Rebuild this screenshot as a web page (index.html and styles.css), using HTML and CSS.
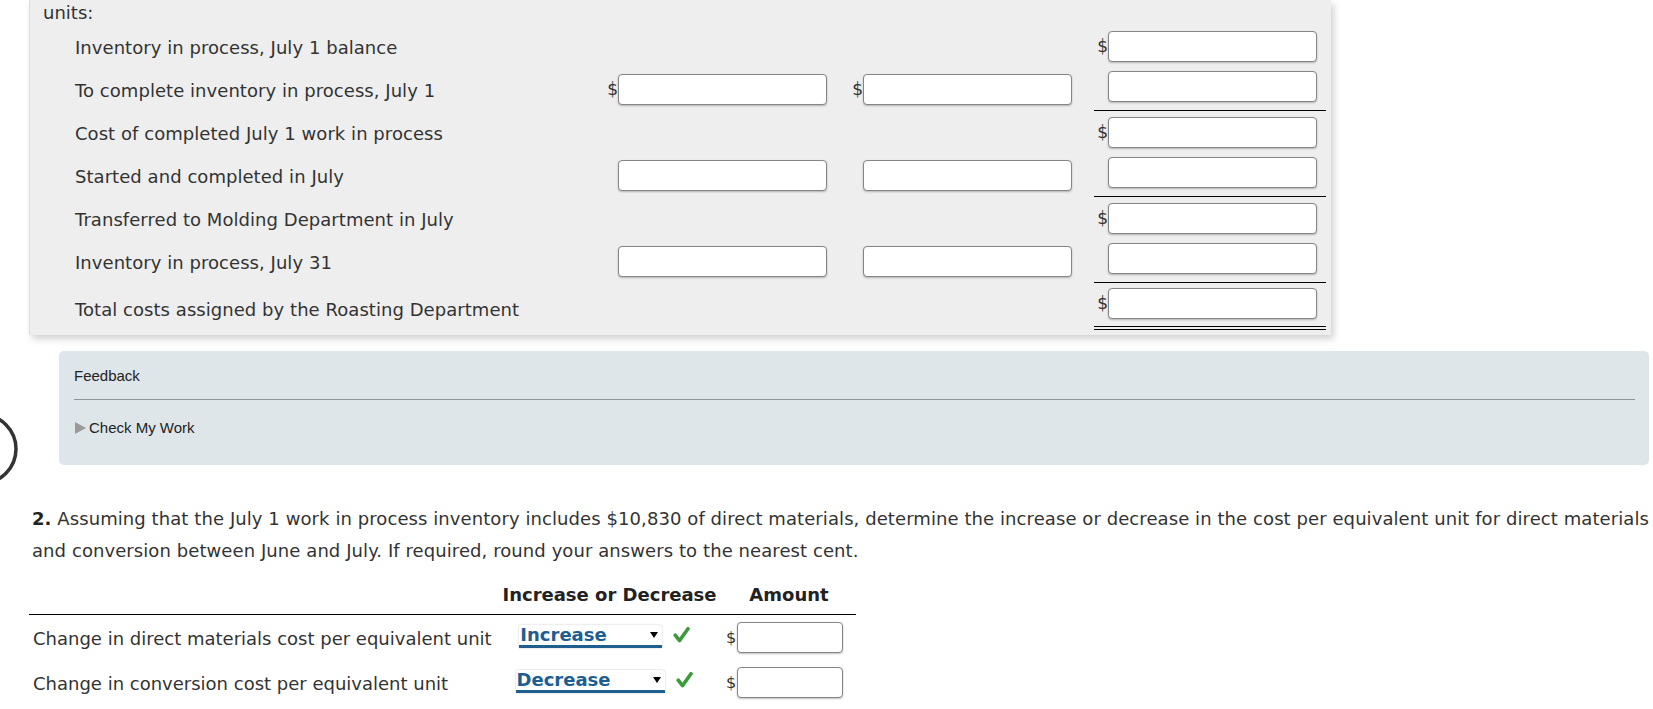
FILE: index.html
```html
<!DOCTYPE html>
<html lang="en">
<head>
<meta charset="utf-8">
<title>Roasting Department costs</title>
<link rel="stylesheet" href="styles.css">
</head>
<body>
<svg class="step-circle" width="24" height="80" viewBox="0 0 24 80" aria-hidden="true">
  <circle cx="-18.3" cy="37" r="34.3" fill="none" stroke="#333" stroke-width="3.5"/>
</svg>

<div class="panel">
  <div class="units">units:</div>
  <div class="rows">
    <div class="row">
      <div class="label">Inventory in process, July 1 balance</div>
      <div class="cell"></div>
      <div class="cell"></div>
      <div class="cell"><span class="dollar">$</span><input class="box" type="text"></div>
    </div>
    <div class="row">
      <div class="label">To complete inventory in process, July 1</div>
      <div class="cell"><span class="dollar">$</span><input class="box" type="text"></div>
      <div class="cell"><span class="dollar">$</span><input class="box" type="text"></div>
      <div class="cell rule"><input class="box" type="text"></div>
    </div>
    <div class="row">
      <div class="label">Cost of completed July 1 work in process</div>
      <div class="cell"></div>
      <div class="cell"></div>
      <div class="cell"><span class="dollar">$</span><input class="box" type="text"></div>
    </div>
    <div class="row">
      <div class="label">Started and completed in July</div>
      <div class="cell"><input class="box" type="text"></div>
      <div class="cell"><input class="box" type="text"></div>
      <div class="cell rule"><input class="box" type="text"></div>
    </div>
    <div class="row">
      <div class="label">Transferred to Molding Department in July</div>
      <div class="cell"></div>
      <div class="cell"></div>
      <div class="cell"><span class="dollar">$</span><input class="box" type="text"></div>
    </div>
    <div class="row">
      <div class="label">Inventory in process, July 31</div>
      <div class="cell"><input class="box" type="text"></div>
      <div class="cell"><input class="box" type="text"></div>
      <div class="cell rule"><input class="box" type="text"></div>
    </div>
    <div class="row row-total">
      <div class="label">Total costs assigned by the Roasting Department</div>
      <div class="cell"></div>
      <div class="cell"></div>
      <div class="cell double"><span class="dollar">$</span><input class="box" type="text"></div>
    </div>
  </div>
</div>

<div class="feedback">
  <div class="fb-title">Feedback</div>
  <div class="fb-divider"></div>
  <div class="fb-check"><span class="fb-arrow"></span>Check My Work</div>
</div>

<p class="question"><b>2.</b> Assuming that the July 1 work in process inventory includes $10,830 of direct materials, determine the increase or decrease in the cost per equivalent unit for direct materials and conversion between June and July. If required, round your answers to the nearest cent.</p>

<div class="answer">
  <div class="a-row a-head">
    <div class="a-label"></div>
    <div class="a-sel">Increase or Decrease</div>
    <div class="a-amt">Amount</div>
  </div>
  <div class="a-row">
    <div class="a-label">Change in direct materials cost per equivalent unit</div>
    <div class="a-sel">
      <span class="select"><span class="sel-text">Increase</span><span class="sel-arrow"></span></span>
      <svg class="check" width="17" height="16" viewBox="0 0 17 16" aria-hidden="true"><path d="M2.2 8.2 L6.5 13.6 L15 1.8" fill="none" stroke="#3c9c3c" stroke-width="3.6" stroke-linecap="round" stroke-linejoin="round"/></svg>
    </div>
    <div class="a-amt"><span class="dollar small">$</span><input class="box amt" type="text"></div>
  </div>
  <div class="a-row">
    <div class="a-label">Change in conversion cost per equivalent unit</div>
    <div class="a-sel">
      <span class="select"><span class="sel-text">Decrease</span><span class="sel-arrow"></span></span>
      <svg class="check" width="17" height="16" viewBox="0 0 17 16" aria-hidden="true"><path d="M2.2 8.2 L6.5 13.6 L15 1.8" fill="none" stroke="#3c9c3c" stroke-width="3.6" stroke-linecap="round" stroke-linejoin="round"/></svg>
    </div>
    <div class="a-amt"><span class="dollar small">$</span><input class="box amt" type="text"></div>
  </div>
</div>
</body>
</html>
```

FILE: styles.css
```css
* { box-sizing: border-box; }

html, body {
  margin: 0;
  padding: 0;
  background: #fff;
}

body {
  position: relative;
  width: 1653px;
  height: 709px;
  overflow: hidden;
  font-family: "DejaVu Sans", Verdana, sans-serif;
  font-size: 18px;
  color: #333;
}

.step-circle {
  position: absolute;
  left: 0;
  top: 412px;
}

/* ---------- cost panel ---------- */
.panel {
  margin-left: 29px;
  width: 1302px;
  background: #eeeeee;
  border-left: 1px solid #dcdcdc;
  padding: 0 5px 5px 13px;
  box-shadow: 3px 4px 7px rgba(0, 0, 0, 0.18);
}

.units {
  height: 25px;
  line-height: 21px;
  padding-top: 2px;
}

.rows {
  margin-left: 32px;
}

.row {
  display: grid;
  grid-template-columns: 516px 232px 232px 232px;
  column-gap: 13px;
  height: 43px;
}

.row-total {
  height: 47px;
}

.label {
  display: flex;
  align-items: center;
  white-space: nowrap;
  padding-top: 2px;
  letter-spacing: 0.05px;
}

.row-total .label {
  padding-top: 5px;
}

.cell {
  display: flex;
  align-items: center;
  justify-content: flex-end;
  padding-right: 9px;
}

.cell.rule {
  border-bottom: 1px solid #000;
  padding-bottom: 5px;
}

.cell.double {
  border-bottom: 4px double #000;
  padding-bottom: 2px;
}

.dollar {
  font-size: 17px;
  line-height: 1;
  color: #333;
}

.box {
  display: block;
  width: 209px;
  height: 31px;
  margin: 0;
  padding: 0 6px;
  background: #fff;
  border: 1px solid #858585;
  border-radius: 4px;
  box-shadow: 0 1px 2px rgba(0, 0, 0, 0.25);
  font: inherit;
  outline: none;
}

/* ---------- feedback ---------- */
.feedback {
  margin: 16px 4px 0 59px;
  height: 114px;
  background: #dfe6e9;
  border-radius: 5px;
  padding: 16px 14px 0 15px;
  font-family: "Liberation Sans", Arial, sans-serif;
  font-size: 15px;
  color: #222;
}

.fb-title {
  line-height: 18px;
}

.fb-divider {
  margin-top: 14px;
  height: 1px;
  background: #8f9699;
}

.fb-check {
  margin-top: 19px;
  line-height: 18px;
  display: flex;
  align-items: center;
}

.fb-arrow {
  width: 0;
  height: 0;
  border-top: 6px solid transparent;
  border-bottom: 6px solid transparent;
  border-left: 11px solid #9a9a9a;
  margin: 0 3px 0 1px;
}

/* ---------- question ---------- */
.question {
  margin: 38px 0 0 32px;
  width: 1618px;
  line-height: 31.5px;
  color: #333;
  letter-spacing: 0.08px;
}

.question b {
  color: #222;
}

/* ---------- answer table ---------- */
.answer {
  margin-left: 29px;
  width: 827px;
}

.a-row {
  display: grid;
  grid-template-columns: 468px 225px 134px;
  height: 45px;
  align-items: center;
}

.a-row.a-head {
  height: 49px;
  align-items: start;
  padding-top: 18px;
  border-bottom: 1px solid #000;
  font-weight: bold;
  color: #222;
  line-height: 22px;
}

.a-label {
  padding-left: 4px;
  white-space: nowrap;
  padding-top: 2px;
}

.a-sel {
  display: flex;
  align-items: center;
  justify-content: center;
  padding-right: 10px;
}

.a-head .a-sel {
  padding-right: 0;
}

.select {
  display: inline-flex;
  align-items: center;
  height: 23px;
  padding: 0 4px 0 1px;
  background: #fff;
  border-bottom: 3px solid #1f5f8f;
  border-radius: 2px 4px 0 0;
  box-shadow: 0 0 2px rgba(0, 0, 0, 0.25);
  margin-top: -3px;
}

.sel-text {
  font-weight: bold;
  color: #1d5e92;
  line-height: 20px;
}

.sel-arrow {
  margin-left: 43px;
  width: 0;
  height: 0;
  border-left: 4px solid transparent;
  border-right: 4px solid transparent;
  border-top: 6px solid #000;
}

.check {
  display: block;
  margin-left: 11px;
  margin-top: -6px;
}

.a-amt {
  display: flex;
  align-items: center;
  padding-left: 4px;
}

.a-head .a-amt {
  justify-content: center;
  padding-left: 0;
}

.dollar.small {
  font-size: 16px;
}

.box.amt {
  width: 106px;
  margin-left: 1px;
}
```
